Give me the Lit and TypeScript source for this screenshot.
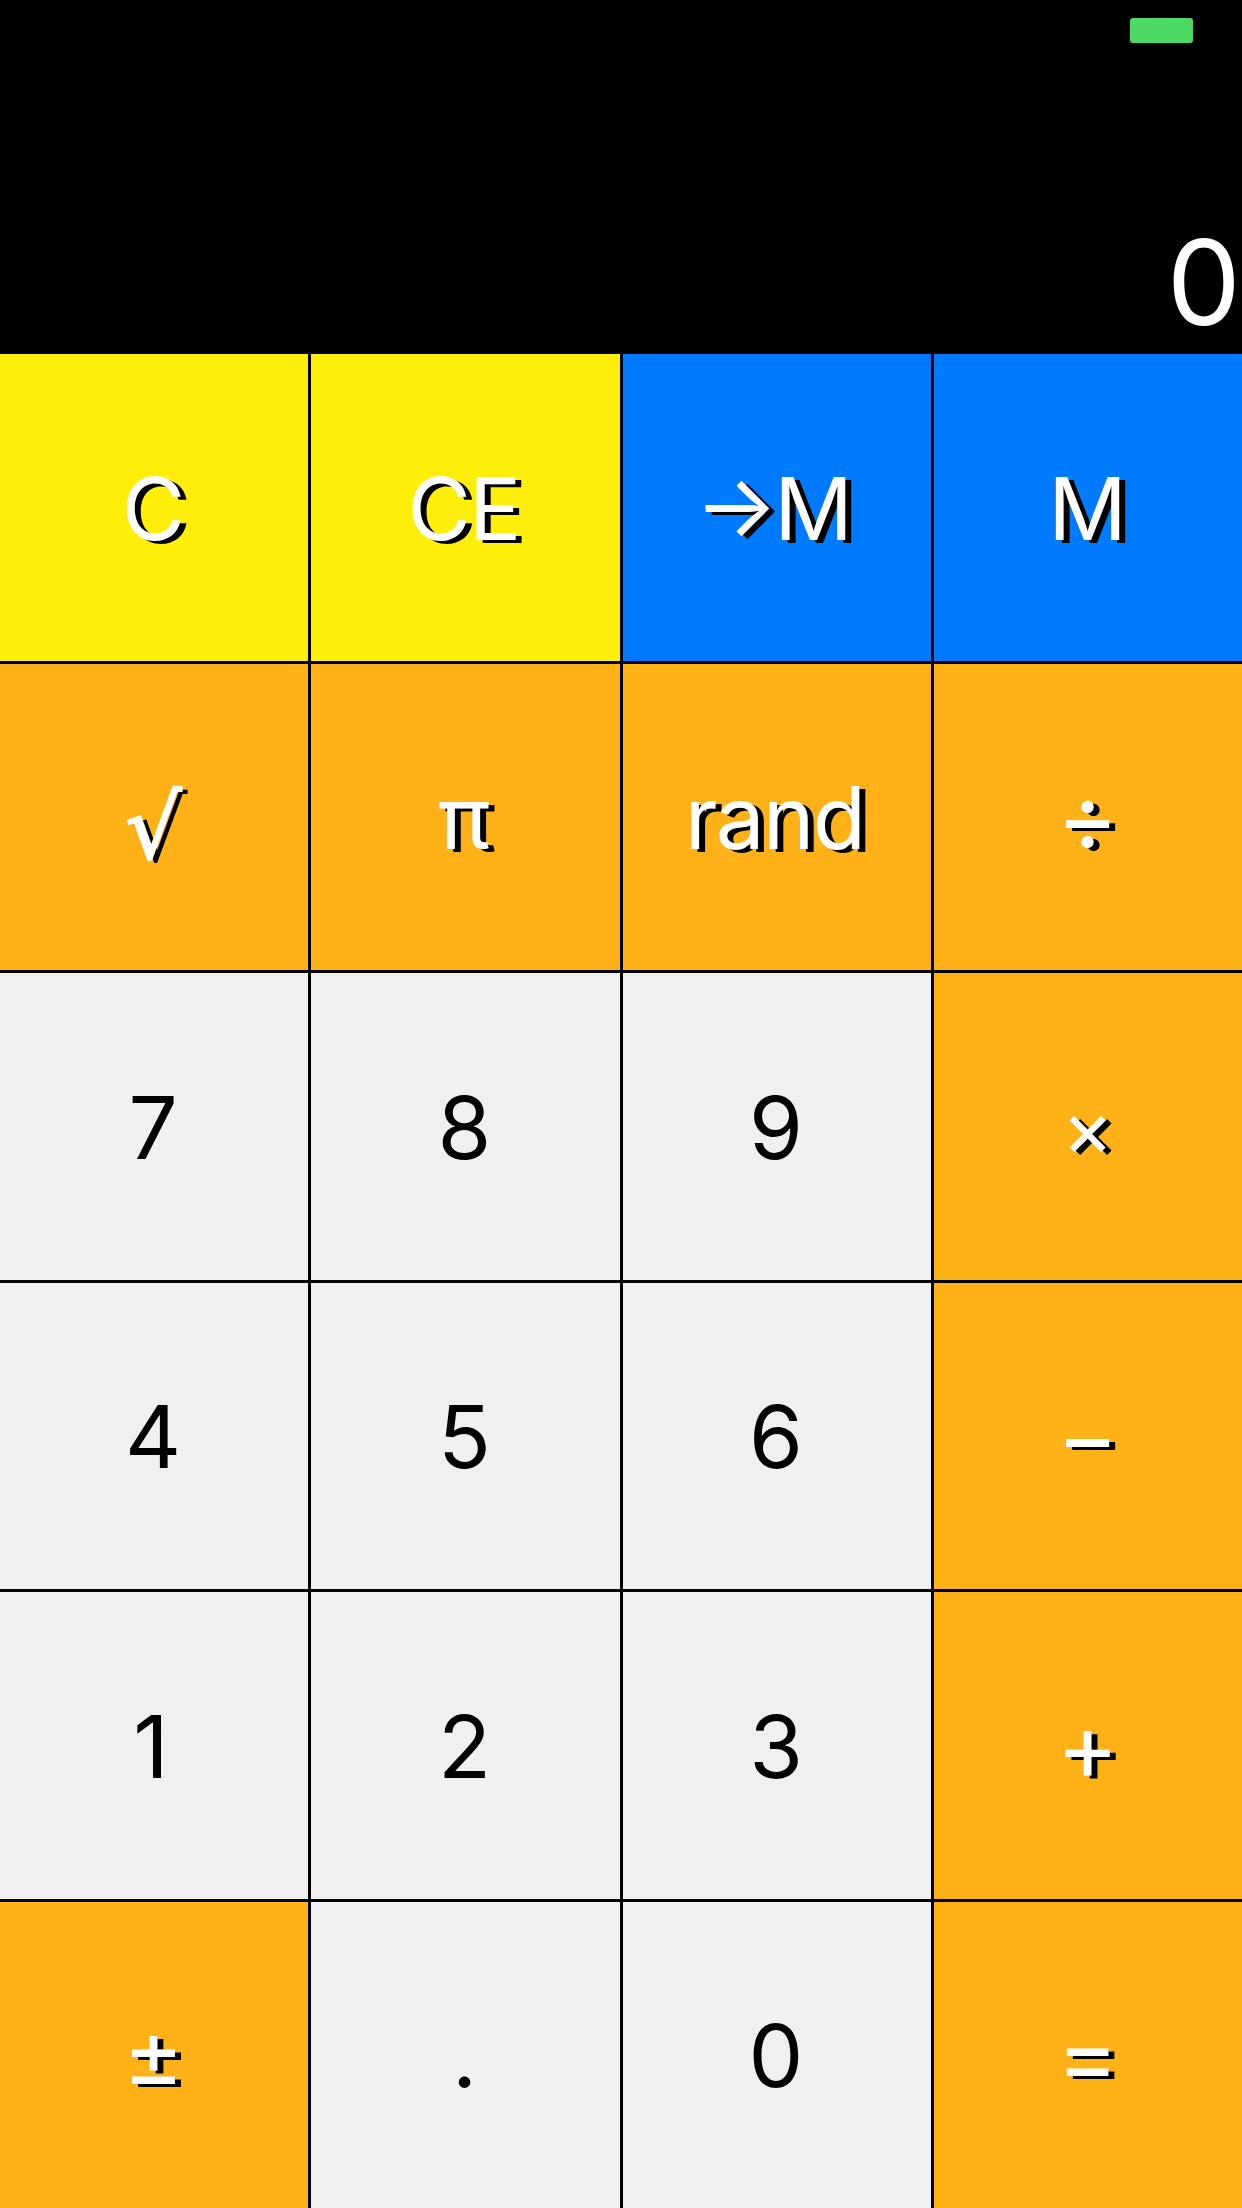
import { LitElement, html, css } from "lit";

interface Key {
  label: string;
  tone: "clear" | "memory" | "operator" | "digit";
  fit?: string;
}

const KEYS: Key[] = [
  { label: "C", tone: "clear" },
  { label: "CE", tone: "clear", fit: "pair" },
  { label: "→M", tone: "memory", fit: "store" },
  { label: "M", tone: "memory" },
  { label: "√", tone: "operator", fit: "root" },
  { label: "π", tone: "operator", fit: "pi" },
  { label: "rand", tone: "operator", fit: "word" },
  { label: "÷", tone: "operator", fit: "sign" },
  { label: "7", tone: "digit" },
  { label: "8", tone: "digit" },
  { label: "9", tone: "digit" },
  { label: "×", tone: "operator", fit: "times" },
  { label: "4", tone: "digit" },
  { label: "5", tone: "digit" },
  { label: "6", tone: "digit" },
  { label: "−", tone: "operator", fit: "sign" },
  { label: "1", tone: "digit", fit: "one" },
  { label: "2", tone: "digit" },
  { label: "3", tone: "digit" },
  { label: "+", tone: "operator", fit: "sign" },
  { label: "±", tone: "operator", fit: "sign raised" },
  { label: ".", tone: "digit" },
  { label: "0", tone: "digit" },
  { label: "=", tone: "operator", fit: "sign" },
];

class AppRoot extends LitElement {
  static properties = { value: { type: String } };

  declare value: string;

  constructor() {
    super();
    this.value = "0";
  }

  static styles = css`
    :host {
      display: flex;
      flex-direction: column;
      width: 1242px;
      height: 2208px;
      overflow: hidden;
      background: #000;
      font-family: Inter, "Liberation Sans", sans-serif;
    }
    .header {
      box-sizing: border-box;
      display: flex;
      flex-direction: column;
      align-items: flex-end;
      justify-content: space-between;
      height: 354px;
      padding-top: 18px;
    }
    .battery {
      width: 63px;
      height: 25px;
      margin-right: 49px;
      border-radius: 3px;
      background: #4cd964;
    }
    .display {
      padding-right: 1px;
      font-size: 117.5px;
      line-height: 144px;
      color: #fff;
    }
    .keypad {
      display: grid;
      grid-template-columns: 308px 309px 308px 308px;
      grid-template-rows: 307px 306px 307px 306px 307px 306px;
      gap: 3px;
    }
    .key {
      display: flex;
      align-items: center;
      justify-content: center;
      padding: 2px 1px 0 0;
      border: 0;
      border-radius: 0;
      font: inherit;
      font-size: 87px;
      line-height: 106px;
      color: #fff;
      text-shadow: 6px 3px 0 #000;
    }
    .clear { background: #ffed0a; }
    .memory { background: #007aff; }
    .operator { background: #ffb118; }
    .digit {
      padding-right: 2px;
      background: #f0f0f0;
      color: #000;
      text-shadow: none;
    }
    .glyph { display: block; }
    .pair { letter-spacing: -2px; padding-right: 3px; }
    .store {
      padding-right: 9px;
      letter-spacing: -3.5px;
      font-feature-settings: "case" 1;
    }
    .word { letter-spacing: -1.7px; padding-right: 4px; }
    .root {
      padding-top: 20px;
      font-family: "DejaVu Sans", sans-serif;
      font-size: 88px;
      -webkit-text-stroke: 2px #fff;
    }
    .sign { padding-bottom: 2px; font-size: 94px; }
    .raised { padding-bottom: 6px; font-size: 93px; }
    .times { font-size: 78px; }
    .one { padding-right: 4px; }
    .pi { padding-right: 2px; }
  `;

  render() {
    return html`
      <div class="header">
        <div class="battery"></div>
        <div class="display">${this.value}</div>
      </div>
      <div class="keypad">
        ${KEYS.map(
          (k) => html`<button class="key ${k.tone}"><span class="glyph ${k.fit ?? ""}">${k.label}</span></button>`
        )}
      </div>
    `;
  }
}

customElements.define("app-root", AppRoot);
